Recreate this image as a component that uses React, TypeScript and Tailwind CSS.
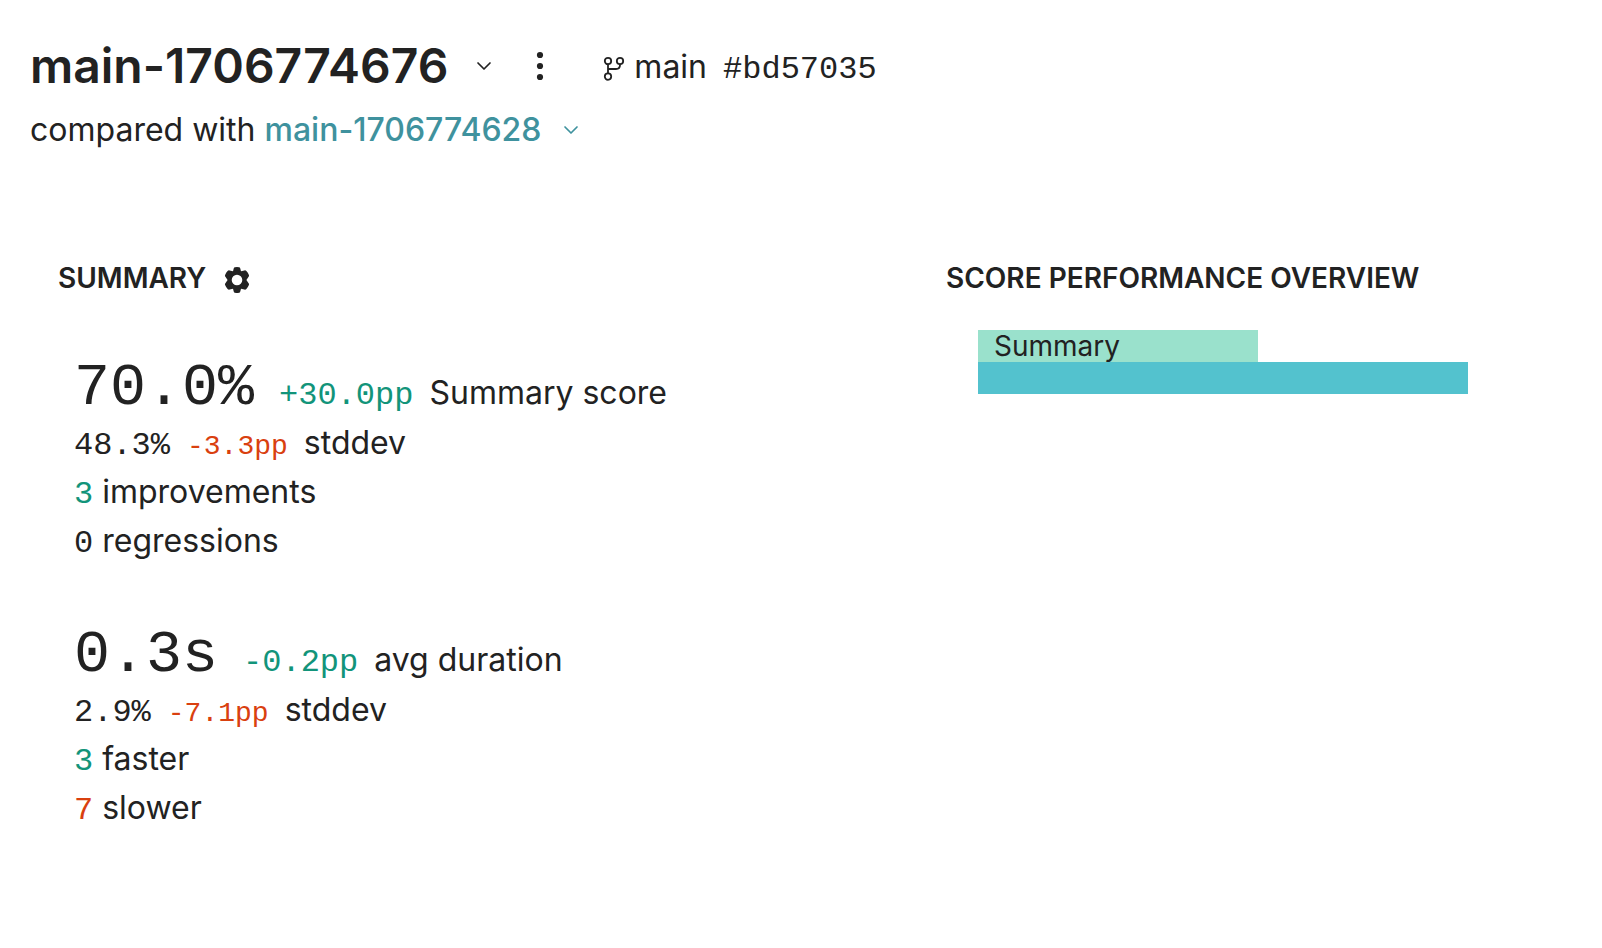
import { ChevronDown } from "lucide-react";

const PX_PER_PERCENT = 7;

type Tone = "good" | "bad" | "neutral";

const TONES: Record<Tone, string> = {
  good: "text-[#12947a]",
  bad: "text-[#d9400f]",
  neutral: "text-[#222222]",
};

interface MetricProps {
  value: string;
  delta: string;
  label: string;
  stddev: string;
  stddevDelta: string;
  counts: { count: number; label: string; tone: Tone }[];
}

const METRICS: MetricProps[] = [
  {
    value: "70.0%",
    delta: "+30.0pp",
    label: "Summary score",
    stddev: "48.3%",
    stddevDelta: "-3.3pp",
    counts: [
      { count: 3, label: "improvements", tone: "good" },
      { count: 0, label: "regressions", tone: "neutral" },
    ],
  },
  {
    value: "0.3s",
    delta: "-0.2pp",
    label: "avg duration",
    stddev: "2.9%",
    stddevDelta: "-7.1pp",
    counts: [
      { count: 3, label: "faster", tone: "good" },
      { count: 7, label: "slower", tone: "bad" },
    ],
  },
];

const BARS = [
  { label: "Summary", percent: 40, color: "bg-[#9ae1cc]" },
  { label: "", percent: 70, color: "bg-[#53c2ce]" },
];

const MONO = "font-['Liberation_Mono',monospace]";

function GearIcon() {
  return (
    <svg viewBox="0 0 26 26" className="size-[26px]" fill="currentColor" aria-hidden="true">
      <path
        fillRule="evenodd"
        d="M9.8 1.2Q10 0.4 11 0.2Q13 -0.2 15 0.2Q16 0.4 16.2 1.2L17 4.2L20.4 3.4Q21.6 3.1 22.4 4Q24 5.8 24.9 7.9Q25.3 9 24.6 9.8L22.4 13L24.6 16.2Q25.3 17 24.9 18.1Q24 20.2 22.4 22Q21.6 22.9 20.4 22.6L17 21.8L16.2 24.8Q16 25.6 15 25.8Q13 26.2 11 25.8Q10 25.6 9.8 24.8L9 21.8L5.6 22.6Q4.4 22.9 3.6 22Q2 20.2 1.1 18.1Q0.7 17 1.4 16.2L3.6 13L1.4 9.8Q0.7 9 1.1 7.9Q2 5.8 3.6 4Q4.4 3.1 5.6 3.4L9 4.2ZM13 7.7a5.3 5.3 0 1 0 0 10.6a5.3 5.3 0 1 0 0-10.6Z"
      />
    </svg>
  );
}

function BranchIcon() {
  return (
    <svg
      viewBox="0 0 24 26"
      className="h-[26px] w-6"
      fill="none"
      stroke="currentColor"
      strokeWidth="1.8"
      aria-hidden="true"
    >
      <circle cx="6" cy="6" r="3.2" />
      <circle cx="18" cy="6" r="3.2" />
      <circle cx="6" cy="21.6" r="3.2" />
      <path d="M6 9.2V18.4M18 9.2V10Q18 14 14 14H6" />
    </svg>
  );
}

function Metric({ value, delta, label, stddev, stddevDelta, counts }: MetricProps) {
  return (
    <div className="pl-4 leading-[49px]">
      <p className="flex h-[70px] items-baseline">
        <span className={`${MONO} text-[60px] leading-[80px]`}>{value}</span>
        <span className={`${MONO} ml-[25px] ${TONES.good}`}>{delta}</span>
        <span className="ml-4">{label}</span>
      </p>
      <p className="flex h-[49px] items-baseline">
        <span className={MONO}>{stddev}</span>
        <span className={`${MONO} ml-[17px] text-[28px] ${TONES.bad}`}>{stddevDelta}</span>
        <span className="ml-4">stddev</span>
      </p>
      {counts.map((item) => (
        <p key={item.label} className="flex h-[49px] items-baseline gap-[9px]">
          <span className={`${MONO} ${TONES[item.tone]}`}>{item.count}</span>
          <span>{item.label}</span>
        </p>
      ))}
    </div>
  );
}

export default function App() {
  return (
    <main className="min-h-screen overflow-hidden bg-white pt-9 pl-[30px] font-[Inter,sans-serif] text-[32px] text-[#222222]">
      <header>
        <div className="flex h-[60px] items-center">
          <h1 className="text-5xl font-semibold">main-1706774676</h1>
          <button type="button" aria-label="Choose experiment" className="ml-6">
            <ChevronDown className="size-6" strokeWidth={1.7} />
          </button>
          <button type="button" aria-label="More actions" className="ml-9">
            <svg viewBox="0 0 16 32" className="h-8 w-4" fill="currentColor" aria-hidden="true">
              <circle cx="8" cy="5" r="3.1" />
              <circle cx="8" cy="16" r="3.1" />
              <circle cx="8" cy="27" r="3.1" />
            </svg>
          </button>
          <div className="ml-[54px] flex items-center pt-1">
            <BranchIcon />
            <p className="ml-2 flex items-baseline gap-4">
              <span>main</span>
              <span className={MONO}>#bd57035</span>
            </p>
          </div>
        </div>
        <div className="mt-2 flex h-[52px] items-center">
          <span>compared with</span>
          <button
            type="button"
            className="ml-[9px] flex items-center font-medium text-[#3f929e]"
          >
            main-1706774628
            <ChevronDown className="ml-[18px] size-6" strokeWidth={1.7} />
          </button>
        </div>
      </header>

      <div className="mt-[102px] grid grid-cols-[74fr_57fr]">
        <section className="min-w-0 pl-7">
          <div className="flex h-10 items-center gap-[18px]">
            <h2 className="text-[28px] font-semibold">SUMMARY</h2>
            <button type="button" aria-label="Summary settings" className="pt-1">
              <GearIcon />
            </button>
          </div>
          <div className="mt-[50px] flex flex-col gap-[50px]">
            {METRICS.map((metric) => (
              <Metric key={metric.label} {...metric} />
            ))}
          </div>
        </section>

        <section className="min-w-0 pl-7">
          <h2 className="flex h-10 items-center text-[28px] font-semibold whitespace-nowrap">
            SCORE PERFORMANCE OVERVIEW
          </h2>
          <div className="mt-8 pl-8">
            {BARS.map((bar) => (
              <div
                key={bar.percent}
                className={`h-8 pl-4 text-[28px] leading-8 ${bar.color}`}
                style={{ width: bar.percent * PX_PER_PERCENT }}
              >
                {bar.label}
              </div>
            ))}
          </div>
        </section>
      </div>
    </main>
  );
}
